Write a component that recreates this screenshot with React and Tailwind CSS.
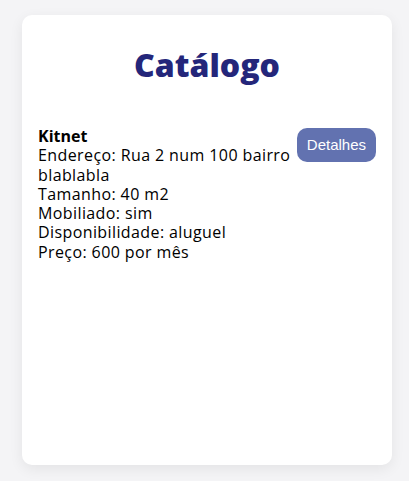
export default function App() {
  return (
    <div className="min-h-[481px] bg-[#f4f4f6] pt-[15px] pl-[22px]">
      <div
        className="w-[370px] h-[450px] bg-white rounded-[10px] shadow-[0_4px_14px_rgba(0,0,0,0.07)] px-4"
        style={{ fontFamily: '"Open Sans", sans-serif' }}
      >
        <h1 className="pt-[30px] text-center text-[32px] leading-[40px] font-extrabold text-[#24267a]">
          Catálogo
        </h1>

        <div className="mt-[42px] flex items-start">
          <div className="w-[260px] text-[16px] leading-[19.3px] tracking-[0.4px] text-black">
            <p className="font-bold tracking-normal">Kitnet</p>
            <p>Endereço: Rua 2 num 100 bairro blablabla</p>
            <p>Tamanho: 40 m2</p>
            <p>Mobiliado: sim</p>
            <p>Disponibilidade: aluguel</p>
            <p>Preço: 600 por mês</p>
          </div>
          <button
            className="ml-auto mt-[1px] h-[34px] px-[10px] rounded-[10px] bg-[#6272b0] text-white text-[15px]"
            style={{ fontFamily: '"Liberation Sans", Arial, sans-serif' }}
          >
            Detalhes
          </button>
        </div>
      </div>
    </div>
  );
}
